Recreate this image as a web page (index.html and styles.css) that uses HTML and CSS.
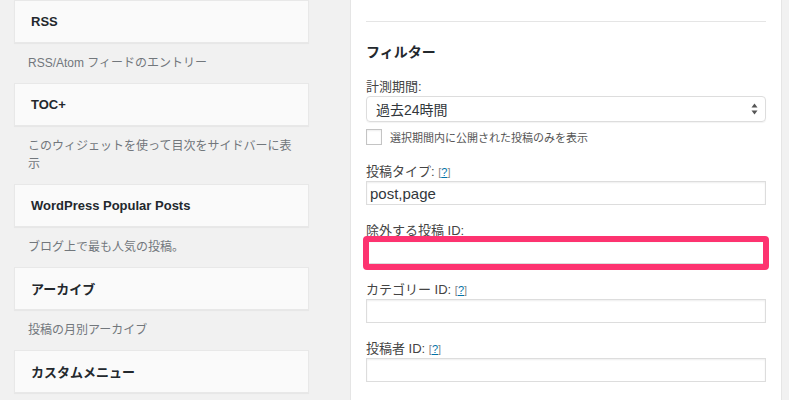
FILE: index.html
```html
<!DOCTYPE html>
<html lang="ja">
<head>
    <meta charset="UTF-8">
    <meta name="viewport" content="width=device-width, initial-scale=1.0">
    <title>ウィジェット</title>
    <link rel="stylesheet" href="styles.css">
</head>
<body>
    <div class="screen">
        <!-- 利用できるウィジェット -->
        <div class="sidebar">
            <div class="widget">RSS</div>
            <p class="desc">RSS/Atom フィードのエントリー</p>
            <div class="widget">TOC+</div>
            <p class="desc">このウィジェットを使って目次をサイドバーに表示</p>
            <div class="widget">WordPress Popular Posts</div>
            <p class="desc">ブログ上で最も人気の投稿。</p>
            <div class="widget">アーカイブ</div>
            <p class="desc">投稿の月別アーカイブ</p>
            <div class="widget">カスタムメニュー</div>
        </div>

        <!-- 設定パネル -->
        <div class="panel">
            <hr class="rule">
            <h4 class="filter-title">フィルター</h4>

            <label class="field-label">計測期間:</label>
            <div class="select">
                <span>過去24時間</span>
                <svg class="arrows" width="7" height="12" viewBox="0 0 7 12">
                    <path d="M3.5 0.5 L6.5 4.5 L0.5 4.5 Z" fill="#555"/>
                    <path d="M3.5 11.5 L6.5 7.5 L0.5 7.5 Z" fill="#555"/>
                </svg>
            </div>

            <label class="check">
                <span class="box"></span>
                選択期間内に公開された投稿のみを表示
            </label>

            <label class="field-label gap-l">投稿タイプ: <span class="help">[<a href="#">?</a>]</span></label>
            <input class="field" type="text" value="post,page">

            <label class="field-label gap">除外する投稿 ID:</label>
            <div class="hl">
                <input class="field" type="text" value="">
            </div>

            <label class="field-label gap">カテゴリー ID: <span class="help">[<a href="#">?</a>]</span></label>
            <input class="field" type="text" value="">

            <label class="field-label gap">投稿者 ID: <span class="help">[<a href="#">?</a>]</span></label>
            <input class="field" type="text" value="">
        </div>
    </div>
</body>
</html>
```

FILE: styles.css
```css
/* 기본 */
body {
    margin: 0;
    background: #f1f1f1;
    font-family: "Liberation Sans", "Noto Sans CJK JP", sans-serif;
    color: #444;
}

.screen {
    display: flex;
    height: 400px;
    overflow: hidden;
}

/* 왼쪽 위젯 목록 */
.sidebar {
    width: 295px;
    margin: 0 41px 0 14px;
    flex-shrink: 0;
}

.widget {
    box-sizing: border-box;
    height: 43px;
    display: flex;
    align-items: center;
    padding: 0 16px 1px;
    background: #fafafa;
    border: 1px solid #e8e8e8;
    box-shadow: 0 1px 1px rgba(0, 0, 0, .04);
    font-size: 13px;
    font-weight: bold;
    color: #23282d;
}

.desc {
    margin: 0;
    padding: 11px 14px;
    font-size: 12px;
    line-height: 18px;
    color: #72777c;
}

/* 오른쪽 설정 패널 */
.panel {
    box-sizing: border-box;
    width: 432px;
    height: 400px;
    flex-shrink: 0;
    padding: 0 15px;
    background: #fff;
    border-left: 1px solid #e5e5e5;
    border-right: 1px solid #e5e5e5;
}

.rule {
    margin: 21px 0 0;
    border: 0;
    border-top: 1px solid #e5e5e5;
}

.filter-title {
    margin: 20px 0 16px;
    font-size: 14px;
    line-height: 20px;
    color: #23282d;
}

.field-label {
    display: block;
    font-size: 13px;
    line-height: 18px;
    color: #444;
}

.gap-l {
    margin-top: 18px;
}

.gap {
    margin-top: 17px;
}

.help {
    font-size: 11px;
    color: #888;
}

.help a {
    color: #0073aa;
}

/* 셀렉트 박스 */
.select {
    box-sizing: border-box;
    height: 26px;
    display: flex;
    align-items: center;
    justify-content: space-between;
    padding: 0 7px 0 9px;
    border: 1px solid #ddd;
    border-radius: 4px;
    box-shadow: 0 1px 1px rgba(0, 0, 0, .05);
    font-size: 14px;
    color: #32373c;
}

/* 체크박스 */
.check {
    display: flex;
    align-items: center;
    height: 16px;
    margin-top: 7px;
    font-size: 11px;
    color: #555;
}

.check .box {
    box-sizing: border-box;
    width: 16px;
    height: 16px;
    margin-right: 8px;
    border: 1px solid #c4c4c4;
    box-shadow: inset 0 1px 2px rgba(0, 0, 0, .07);
}

/* 입력칸 */
.field {
    display: block;
    box-sizing: border-box;
    width: 100%;
    height: 24px;
    margin: 0;
    padding: 0 3px;
    border: 1px solid #ddd;
    box-shadow: inset 0 1px 2px rgba(0, 0, 0, .07);
    font-family: "Liberation Sans", "Noto Sans CJK JP", sans-serif;
    font-size: 15px;
    color: #32373c;
    outline: none;
}

/* 강조 표시 (분홍 테두리) */
.hl {
    position: relative;
}

.hl::after {
    content: '';
    position: absolute;
    top: -4px;
    bottom: -6px;
    left: -3px;
    right: -3px;
    border: 6px solid #fd3370;
    border-radius: 4px;
}
```
